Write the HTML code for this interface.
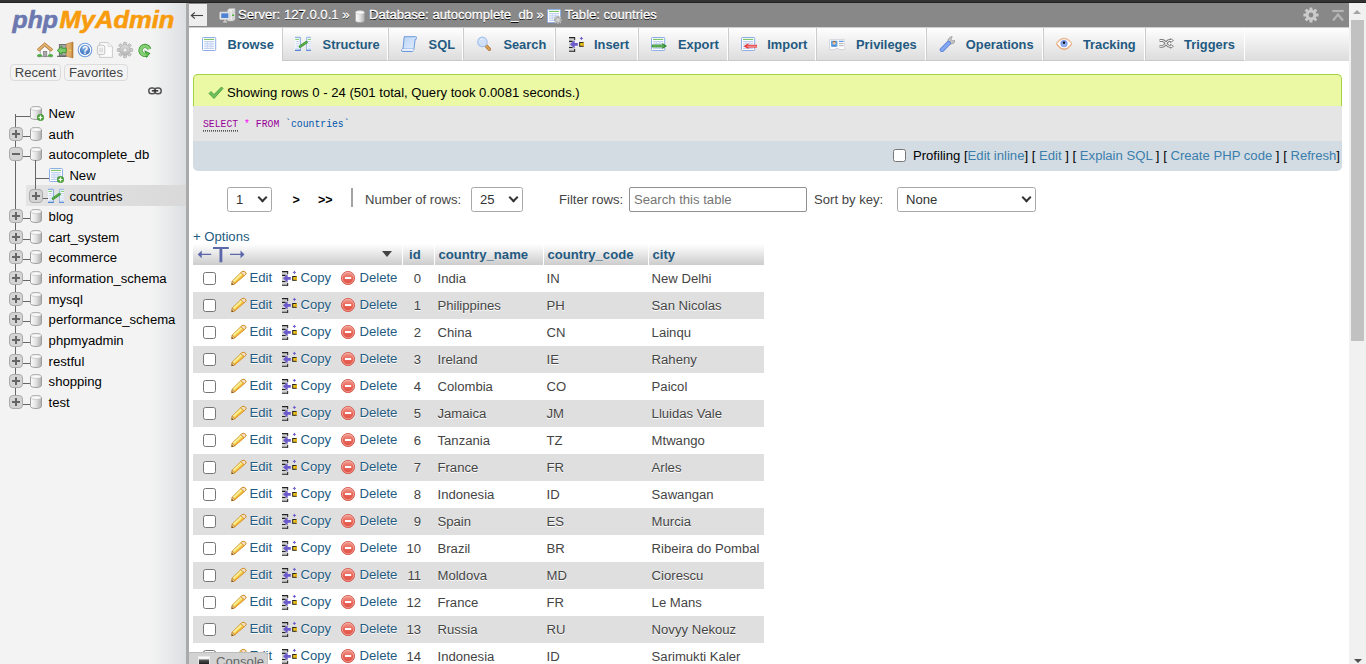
<!DOCTYPE html>
<html><head><meta charset="utf-8"><title>phpMyAdmin</title>
<style>
*{box-sizing:border-box}
html,body{margin:0;padding:0}
body{width:1366px;height:664px;overflow:hidden;background:#fff;position:relative;font-family:"Liberation Sans",sans-serif;font-size:13.12px;color:#444}
#strip{position:absolute;left:0;top:0;width:1366px;height:3px;background:linear-gradient(#333 0,#333 2px,#222 2px);z-index:50}
svg.i16{width:16px;height:16px;vertical-align:-3px;overflow:visible}
/* sidebar */
#nav{position:absolute;left:0;top:3px;width:186px;height:661px;background:linear-gradient(to right,#f3f3f3 0,#f3f3f3 151px,#e9ebec 166px,#dcdfe1 186px);color:#000}
#resz{position:absolute;left:186px;top:3px;width:3px;height:661px;background:#aaa}
#logo{position:absolute;left:0;top:0}
#navic{position:absolute;left:0;top:39px;width:186px;height:18px}
#navic svg{position:absolute;top:0;width:16px;height:16px;overflow:visible}
.nbtn{position:absolute;top:61px;height:17px;border:1px solid #dcdcdc;border-radius:4px;background:#f3f3f3;font-size:13.12px;line-height:15px;color:#444;text-align:center}
#tree{position:absolute;left:0;top:100px;width:186px}
.tl{position:absolute;background:#666}
.ti{position:absolute;height:20px;font-size:13.12px;line-height:20px;color:#000;white-space:nowrap}
.pm{position:absolute;width:14px;height:14px;border:1px solid #aaa;border-radius:4px;background:#d4d4d4}
.pm:before{content:"";position:absolute;left:2px;top:5px;width:8px;height:2px;background:#666}
.pm.p:after{content:"";position:absolute;left:5px;top:2px;width:2px;height:8px;background:#666}
/* top */
#hdr{position:absolute;left:189px;top:3px;width:1160px;height:24px;background:#888;color:#fff;-webkit-text-stroke:.3px #fff;font-size:13.12px;line-height:24px;white-space:nowrap;text-shadow:0 1px 0 #000}
#coll{position:absolute;left:0;top:1px;width:18px;height:22px;background:#eee;color:#555;text-shadow:none}
#tabs{position:absolute;left:189px;top:27px;width:1160px;height:34px;background:linear-gradient(#fff,#dcdcdc)}
.tab{position:absolute;top:0;height:34px;border-left:1px solid #ccc;border-right:1px solid #fff;border-bottom:1px solid #c8c8c8;font-weight:bold;color:#235a81;font-size:12.85px;line-height:36px;white-space:nowrap}
.tab.act{background:#fff;height:34px;border-left:0;border-bottom:0}
.tab svg,.tab span{margin-left:-1px}
.tab.act svg,.tab.act span{margin-left:0}
#hline{position:absolute;left:189px;top:27px;width:1160px;height:1px;background:#cfcfcf}
.tab svg{position:absolute;top:9px;width:16px;height:16px;overflow:visible}
.tab span{position:absolute;top:0}
#ok{position:absolute;left:193px;top:74px;width:1149px;height:32px;background:#ebf8a4;border:1px solid #a2d246;border-bottom:0;border-radius:5px 5px 0 0;color:#000;font-size:13.12px;line-height:35px}
#sql{position:absolute;left:193px;top:106px;width:1149px;height:35px;background:#e5e5e5;font-family:"Liberation Mono",monospace;font-size:9.77px;line-height:34px;white-space:pre}
#sql>span{transform:scaleY(1.18);transform-origin:0 60%;top:2px}
#tools{position:absolute;left:193px;top:141px;width:1149px;height:30px;background:#d3dce3;border-radius:0 0 5px 5px;color:#000;font-size:13.12px;line-height:29px;text-align:right;white-space:nowrap}
#tools a{color:#3a7ead}
.cb{display:inline-block;width:13px;height:13px;border:1px solid #767676;border-radius:2.5px;background:#fff;vertical-align:middle}
#res td.ck .cb{position:relative;top:-1px}
#navbar{position:absolute;left:189px;top:180px;width:1160px;height:40px;font-size:13.12px;color:#444}
#navbar>*{position:absolute}
.sel{border:1px solid #a8a8a8;border-radius:2.500px;background:#fff;height:25px;line-height:24px;color:#333;font-size:13.12px;padding-left:8px}
.sel:after{content:"";position:absolute;box-sizing:border-box;right:4.900px;top:5.900px;width:7px;height:7px;border-right:2.300px solid #333;border-bottom:2.300px solid #333;transform:rotate(45deg)}
.inp{border:1px solid #8f8f8f;border-radius:2px;background:#fff;height:25px;line-height:24px;color:#757575;font-size:13.12px;padding-left:4px}
.gt{font-weight:bold;color:#000;font-size:12.500px;line-height:15px}
.lb{line-height:15px}
#opts{position:absolute;left:193px;top:229px;font-size:13.12px;line-height:16px;color:#235a81}
/* table */
#res{position:absolute;left:193px;top:244px;width:571px;table-layout:fixed;border-collapse:collapse;font-size:13.12px;color:#444}
#res th{height:21px;padding:0;background:linear-gradient(#fff,#ccc);color:#235a81;font-weight:bold;text-align:left;font-size:13.12px;white-space:nowrap;position:relative;padding-left:4px}
#res th+th{border-left:1px solid #fff}
#res th.hid{padding-left:6.500px}
#res td.ck{padding-left:10px}
#res td.id{text-align:right;padding-right:13px}
#res td.cn,#res td.cc{padding-left:3.500px}
#res td.ci{padding-left:3.600px}
#res td{height:27px;padding:0;white-space:nowrap;text-shadow:0 1px 0 #fff}
#res tr.even td{background:#dfdfdf}
#res tr.odd td{background:#fff}
#res td.ac{color:#235a81;position:relative;padding-left:22.500px}
#res td.ac svg.ic{position:absolute;top:5px;width:16px;height:16px;overflow:visible}
#res td.ac span{position:relative;top:-1px}
#console{position:absolute;left:189px;top:652px;width:79px;height:20px;background:#d2d2d2;border-top:1px solid #bcbcbc;border-right:1px solid #c4c4c4;border-radius:0 4px 0 0;font-size:13.12px;color:#666;line-height:17px;padding-left:27px;text-shadow:none}
#console .cbx{position:absolute;left:9px;top:3px;width:12px;height:12px;background:linear-gradient(#fff 0,#eee 2px,#555 3px,#111 8px);border:1px solid #e8e8e8;border-bottom:0}
#sbar{position:absolute;left:1349px;top:3px;width:17px;height:661px;background:#f1f1f1}
#sbar .thumb{position:absolute;left:2px;top:17px;width:13px;height:321px;background:#c1c1c1}
#sbar .up{position:absolute;left:4px;top:7px;width:0;height:0;border:4px solid transparent;border-top:0;border-bottom:4px solid #a3a3a3}
#sbar .down{position:absolute;left:4.500px;bottom:1px;width:0;height:0;border:4px solid transparent;border-bottom:0;border-top:4px solid #505050}

.tri{position:absolute;left:189px;top:7px;width:0;height:0;border-left:5.500px solid transparent;border-right:5.500px solid transparent;border-top:6px solid #444}

</style></head><body>
<svg width="0" height="0" style="position:absolute">
<defs>
<linearGradient id="gdb" x1="0" x2="1" y1="0" y2="0"><stop offset="0" stop-color="#fdfdfd"/><stop offset=".5" stop-color="#e2e2e2"/><stop offset="1" stop-color="#adadad"/></linearGradient>
<linearGradient id="gpen" x1="0" x2="1" y1="0" y2="1"><stop offset="0" stop-color="#fbe58a"/><stop offset="1" stop-color="#e9b21f"/></linearGradient>
<radialGradient id="gdel" cx=".4" cy=".3" r=".8"><stop offset="0" stop-color="#f7a08f"/><stop offset="1" stop-color="#d8372a"/></radialGradient>
<radialGradient id="ghelp" cx=".5" cy=".3" r=".8"><stop offset="0" stop-color="#8db4e6"/><stop offset="1" stop-color="#2f66b5"/></radialGradient>
<symbol id="i-db" viewBox="0 0 12 14"><path d="M.5 2.5C.5 1.4 3 .5 6 .5s5.500.9 5.500 2v9c0 1.100-2.500 2-5.500 2S.5 12.600.5 11.500z" fill="url(#gdb)" stroke="#a0a0a0"/><ellipse cx="6" cy="2.600" rx="5.200" ry="1.900" fill="#f8f8f8" stroke="#bcbcbc" stroke-width=".6"/></symbol>
<symbol id="i-plus" viewBox="0 0 8 8"><circle cx="4" cy="4" r="3.800" fill="#4fa83a" stroke="#2e7d22" stroke-width=".5"/><path d="M4 1.800v4.400M1.800 4h4.400" stroke="#fff" stroke-width="1.400"/></symbol>
<symbol id="i-edit" viewBox="0 0 16 16"><path d="M.8 14.700L1.300 11 11 1.600Q13.300.7 14.500 2.300 15.300 3.500 14.600 4.500L4 13.700z" fill="#f6e25e" stroke="#c98a1f" stroke-width=".9" stroke-linejoin="round"/><path d="M4 12.900L13.900 4.300" stroke="#eda73a" stroke-width="1.300"/><path d="M2.300 11.400L11.800 2.400" stroke="#fbf3b0" stroke-width="1.200"/><path d="M11 1.600Q13.300.7 14.500 2.300 15.300 3.500 14.600 4.500L13.300 5.700 9.800 2.800z" fill="#f8dfcb" stroke="#c98a1f" stroke-width=".8"/><path d="M.8 14.700L1.300 11 4 13.700z" fill="#f5d6b0" stroke="#b97a22" stroke-width=".7" stroke-linejoin="round"/><path d="M.6 14.900l.3-1.900 1.500 1.400z" fill="#6a4208"/></symbol>
<symbol id="i-copy" viewBox="0 0 16 16"><rect x="0" y="1.600" width="5.600" height="13.600" fill="#cfcfcf"/><path d="M0 1.600h6M0 15.300h6M0 5.400h3.600M0 11.500h3.600" stroke="#222" stroke-width="1.100"/><path d="M5.700 1.100v2.900M5.700 13v2.800" stroke="#222" stroke-width="1"/><path d="M1 8.300L5.600 4.200v2.800h3.200v2.700H5.600v2.900z" fill="#6a5acd"/><rect x="10.700" y="6.500" width="3.600" height="3.800" fill="#f8c81c" stroke="#222" stroke-width="1"/><path d="M14.300 6.500v3.800" stroke="#f8c81c" stroke-width="1.100"/><path d="M12.400.9v3M10.900 2.400h3" stroke="#6a5acd" stroke-width="1"/></symbol>
<symbol id="i-del" viewBox="0 0 16 16"><defs><linearGradient id="gdl" x1="0" x2="0" y1="0" y2="1"><stop offset="0" stop-color="#f3a196"/><stop offset=".5" stop-color="#e8665a"/><stop offset="1" stop-color="#e04f43"/></linearGradient></defs><circle cx="8" cy="8" r="6.600" fill="url(#gdl)" stroke="#d2594c" stroke-width=".9"/><circle cx="8" cy="8" r="5.700" fill="none" stroke="#f6b9b0" stroke-width=".6"/><rect x="5" y="7" width="6.200" height="2" fill="#fff"/></symbol>
<symbol id="i-browse" viewBox="0 0 16 16"><rect x=".5" y="1.500" width="13.200" height="13" rx=".8" fill="#fff" stroke="#8eaee8"/><path d="M2 3.400h10.200" stroke="#79c267" stroke-width="1.100"/><path d="M2 5.700h10.200M2 7.900h10.200M2 10.100h10.200M2 12.300h10.200" stroke="#a9c0ea" stroke-width=".9"/><path d="M5.400 5.200v7.600M8.900 5.200v7.600" stroke="#c3d4f3" stroke-width=".8"/></symbol>
<symbol id="i-struct" viewBox="0 0 16 16"><path d="M0 1.300h5.300v13H0" fill="#fff" stroke="#7aa0e2" stroke-width="1"/><path d="M0 14.300h5.800" stroke="#4f7fd0" stroke-width="1.200"/><path d="M16 1.300h-4.300v13H16" fill="#fff" stroke="#8fb0ea" stroke-width="1"/><path d="M11.200 14.300H16" stroke="#5f8ad6" stroke-width="1.200"/><path d="M.3 3.300h3.700M12.800 3.300H16" stroke="#6fc05e" stroke-width="1"/><path d="M.5 5.600h3.500M.5 7.800h3.500M.5 10h3.500M.5 12.200h3.500M13 5.600h3M13 7.800h3M13 10h3M13 12.200h3" stroke="#b5cbef" stroke-width=".9"/><path d="M5 10.600L11.600 6.200" stroke="#3f9a34" stroke-width="2.700" stroke-linecap="round"/><path d="M5 10.600L11.600 6.200" stroke="#8fd07f" stroke-width=".8" stroke-dasharray="1.200 1"/></symbol>
<symbol id="i-sql" viewBox="0 0 16 16"><defs><linearGradient id="gsq" x1="0" x2="1" y1="0" y2="1"><stop offset="0" stop-color="#b9d3f6"/><stop offset="1" stop-color="#e6f0fc"/></linearGradient></defs><path d="M3.200.700H14.600q1.700.3 1.300 1.800-.4 1-1.700.9L12.800 13.500q-.2 1.800-1.600 2H1.300q-1.200-.3-.8-1.500.4-1 1.500-.9z" fill="url(#gsq)" stroke="#5f8fd6" stroke-width=".9" stroke-linejoin="round"/><path d="M1.200 13.600h10q.9.200.6 1.200" fill="none" stroke="#fff" stroke-width="1.300"/><path d="M1.600 12.800h10.400" stroke="#7fa5e0" stroke-width=".6"/></symbol>
<symbol id="i-search" viewBox="0 0 16 16"><path d="M9 9.700L12.300 13.200" stroke="#a86a20" stroke-width="3.400" stroke-linecap="round"/><path d="M9 9.700L12.300 13.200" stroke="#dca260" stroke-width="1.900" stroke-linecap="round"/><circle cx="5.400" cy="5.900" r="4.700" fill="#cfe0f8" stroke="#a5c2ec" stroke-width="1.200"/><path d="M2.800 4.500a3 3 0 0 1 3-1.600" fill="none" stroke="#eef5fd" stroke-width="1"/></symbol>
<symbol id="i-export" viewBox="0 0 16 16"><rect x=".5" y="1.500" width="13.200" height="13" rx=".8" fill="#fff" stroke="#8eaee8"/><path d="M2 3.400h10.200" stroke="#79c267" stroke-width="1.100"/><path d="M2 5.700h10.200M2 7.900h10.200M2 10.100h10.200M2 12.300h10.200" stroke="#a9c0ea" stroke-width=".9"/><path d="M5.400 5.200v7.600M8.900 5.200v7.600" stroke="#c3d4f3" stroke-width=".8"/><path d="M.8 10h11" stroke="#2f8a2a" stroke-width="2.800"/><path d="M11.300 7.100L16.200 10l-4.900 2.900z" fill="#2f8a2a"/><path d="M1.500 10h11.500" stroke="#9ad88a" stroke-width=".8"/></symbol>
<symbol id="i-import" viewBox="0 0 16 16"><rect x=".5" y="1.500" width="13.200" height="13" rx=".8" fill="#fff" stroke="#8eaee8"/><path d="M2 3.400h10.200" stroke="#79c267" stroke-width="1.100"/><path d="M2 5.700h10.200M2 7.900h10.200M2 10.100h10.200M2 12.300h10.200" stroke="#a9c0ea" stroke-width=".9"/><path d="M5.400 5.200v7.600M8.900 5.200v7.600" stroke="#c3d4f3" stroke-width=".8"/><path d="M16.200 10.200H7" stroke="#e8383a" stroke-width="2.800"/><path d="M7.400 7.300L2.500 10.200l4.900 2.900z" fill="#e8383a"/><path d="M6 10.200h9.600" stroke="#fbc0c0" stroke-width=".8"/></symbol>
<symbol id="i-priv" viewBox="0 0 16 16"><path d="M1.200 3.700h13.800q.8 0 .8.800v8.300q0 .8-.8.800H10.400q-.3-1.300-2.300-1.300t-2.300 1.300H1.200q-.8 0-.8-.8V4.500q0-.8.800-.8z" fill="#fdfdfd" stroke="#c6cad2" stroke-width=".8"/><rect x="2" y="4.800" width="6.400" height="5.800" fill="#5ba3e8"/><circle cx="5.200" cy="7" r="1.700" fill="#f0c39a"/><path d="M3.400 6.700q.3-1.900 1.900-1.800 1.600 0 1.700 1.800-.9-.9-1.800-.8-1 0-1.800.8z" fill="#8a5a2a"/><path d="M2.600 10.600q2.600-3 5.200 0z" fill="#3f7fd0"/><path d="M10 5.400h4.600" stroke="#4f8fe0" stroke-width="1.100"/><path d="M10 7.600h4.600M10 9.700h4.600" stroke="#a9a9a9" stroke-width=".9"/></symbol>
<symbol id="i-oper" viewBox="0 0 16 16"><path d="M10.200 7.600L8.700 6Q8.400 2.400 11.700.9L13.200.6 12 3.300l1.300 1.600 2.900-.5Q15.800 7.800 12.200 8z" fill="#c6c6c6" stroke="#9a9a9a" stroke-width=".8" stroke-linejoin="round"/><path d="M3 13.800L9.600 7.200" stroke="#5a82d8" stroke-width="4.600" stroke-linecap="round"/><path d="M3 13.800L9.600 7.200" stroke="#86a8f0" stroke-width="3" stroke-linecap="round"/></symbol>
<symbol id="i-track" viewBox="0 0 16 16"><path d="M.4 7.700Q8-2.700 16 7.700 8 19.500.4 7.700z" fill="#fff" stroke="#ecbb96" stroke-width="1.300"/><path d="M1 8.400Q8 17.800 15.400 8.400" fill="none" stroke="#e3a67a" stroke-width="1"/><circle cx="8" cy="7.600" r="3.600" fill="#7a9bea"/><circle cx="8" cy="8.300" r="2.400" fill="#93b0f0"/><circle cx="8" cy="6.800" r="1.200" fill="#111"/></symbol>
<symbol id="i-trig" viewBox="0 0 16 16"><g fill="none" stroke="#7d7d7d" stroke-width="2.800"><path d="M.6 4.500H3.400C6.800 4.500 7.300 10.300 10.300 10.300H12"/><path d="M.6 10.300H3.400C6.800 10.300 7.300 4.500 10.300 4.500H12"/></g><path d="M11.500 2.500L14.500 4.500l-3 2zM11.500 8.300L14.500 10.300l-3 2z" fill="#fff" stroke="#7d7d7d" stroke-width=".9" stroke-linejoin="round"/><g fill="none" stroke="#fff" stroke-width="1"><path d="M1.100 4.500H3.400C6.800 4.500 7.300 10.300 10.300 10.300H12.500"/><path d="M1.100 10.300H3.400C6.800 10.300 7.300 4.500 10.300 4.500H12.500"/></g></symbol>
<symbol id="i-tbl" viewBox="0 0 14 14"><rect x=".5" y=".5" width="13" height="13" rx=".8" fill="#fff" stroke="#8eaee8"/><path d="M2 2.400h10" stroke="#79c267" stroke-width="1.100"/><path d="M2 4.700h10M2 6.900h10M2 9.100h10M2 11.300h10" stroke="#a9c0ea" stroke-width=".9"/><path d="M5.300 4.200v7.600M8.700 4.200v7.600" stroke="#c3d4f3" stroke-width=".8"/></symbol>
</defs></svg>

<div id="strip"></div>
<div id="nav">
<svg id="logo" width="186" height="36" viewBox="0 0 186 36"><g font-family="Liberation Sans, sans-serif" font-style="italic" font-weight="bold" font-size="23.300" stroke-width=".6" stroke-linejoin="round">
<text x="12.500" y="24.600" fill="#6c78af" stroke="#6c78af" textLength="45.500" lengthAdjust="spacingAndGlyphs">php</text>
<text x="59.400" y="24.600" fill="#f89c0e" stroke="#f89c0e" textLength="115.100" lengthAdjust="spacingAndGlyphs">MyAdmin</text></g></svg>
<div id="navic">
<svg style="left:37px" viewBox="0 0 16 16"><path d="M3.400 8.200L7.700 4.300l5.100 3.900V14.300H3.400z" fill="#fbfbfb" stroke="#9a9a9a" stroke-width=".7"/><rect x="6.300" y="9.500" width="3.500" height="5" fill="#a9a9a9" stroke="#7d7d7d" stroke-width=".7"/><path d="M.3 7.300L7.700.8l8 6.500-1.700 2L7.700 4 2 9.300z" fill="#e2b271" stroke="#b0722a" stroke-width=".8" stroke-linejoin="round"/><ellipse cx="2.600" cy="13.600" rx="2.600" ry="1.600" fill="#4db044"/><ellipse cx="13.500" cy="13.600" rx="2.600" ry="1.600" fill="#4db044"/><path d="M.2 14.600h15.800" stroke="#8a8a8a" stroke-width=".5"/></svg>
<svg style="left:57px" viewBox="0 0 16 16"><defs><linearGradient id="gdoor" x1="0" x2="1"><stop offset="0" stop-color="#e6bb7e"/><stop offset=".7" stop-color="#d9a45c"/><stop offset="1" stop-color="#b5762a"/></linearGradient></defs><rect x="2.400" y="2.600" width="7" height="11.400" fill="#a9a9a9" stroke="#6a6a6a" stroke-width="1"/><path d="M0 14.300h9.500" stroke="#555" stroke-width="1"/><path d="M9.200 2L16 0v16L9.200 14z" fill="url(#gdoor)" stroke="#b07a30" stroke-width=".6"/><circle cx="13.300" cy="8.400" r=".9" fill="#f7dc3c"/><path d="M.2 8.400L4.800 4v2.200h4.400v4.400H4.800v2.200z" fill="#79c968" stroke="#2f8a2a" stroke-width=".8" stroke-linejoin="round"/></svg>
<svg style="left:77px" viewBox="0 0 16 16"><circle cx="8" cy="8" r="6.800" fill="#fff" stroke="#6e9be0" stroke-width="1.100"/><circle cx="8" cy="8" r="5.100" fill="url(#ghelp)"/><text x="8" y="11.600" text-anchor="middle" font-family="Liberation Sans, sans-serif" font-weight="bold" font-size="10" fill="#fff">?</text></svg>
<svg style="left:97px" viewBox="0 0 16 16"><path d="M2.600.6H11l4.400 4V15.400H2.600z" fill="#fcfcfc" stroke="#c4c4c4" stroke-width=".9"/><path d="M11 .6v4h4.400" fill="#f1f1f1" stroke="#d6d6d6" stroke-width=".7"/><rect x=".4" y="3.200" width="7.400" height="9.400" rx="2" fill="#f6f6f6" stroke="#bdbdbd" stroke-width=".9"/><path d="M3 5.800v4.400M5.100 5.800v4.400" stroke="#cfcfcf" stroke-width="1.100"/></svg>
<svg style="left:117px" viewBox="0 0 16 16"><defs><linearGradient id="ggear" x1="0" x2="0" y1="0" y2="1"><stop offset="0" stop-color="#dedede"/><stop offset="1" stop-color="#b4b4b4"/></linearGradient></defs><rect x="6.500" y=".3" width="3" height="4" rx=".7" transform="rotate(0 8 8)" fill="#cfcfcf" stroke="#a3a3a3" stroke-width=".6"/><rect x="6.500" y=".3" width="3" height="4" rx=".7" transform="rotate(45 8 8)" fill="#cfcfcf" stroke="#a3a3a3" stroke-width=".6"/><rect x="6.500" y=".3" width="3" height="4" rx=".7" transform="rotate(90 8 8)" fill="#cfcfcf" stroke="#a3a3a3" stroke-width=".6"/><rect x="6.500" y=".3" width="3" height="4" rx=".7" transform="rotate(135 8 8)" fill="#cfcfcf" stroke="#a3a3a3" stroke-width=".6"/><rect x="6.500" y=".3" width="3" height="4" rx=".7" transform="rotate(180 8 8)" fill="#cfcfcf" stroke="#a3a3a3" stroke-width=".6"/><rect x="6.500" y=".3" width="3" height="4" rx=".7" transform="rotate(225 8 8)" fill="#cfcfcf" stroke="#a3a3a3" stroke-width=".6"/><rect x="6.500" y=".3" width="3" height="4" rx=".7" transform="rotate(270 8 8)" fill="#cfcfcf" stroke="#a3a3a3" stroke-width=".6"/><rect x="6.500" y=".3" width="3" height="4" rx=".7" transform="rotate(315 8 8)" fill="#cfcfcf" stroke="#a3a3a3" stroke-width=".6"/><circle cx="8" cy="8" r="5.300" fill="url(#ggear)" stroke="#a8a8a8" stroke-width=".5"/><circle cx="8" cy="8" r="2" fill="#f0f0f0" stroke="#b0b0b0" stroke-width=".6"/></svg>
<svg style="left:137px" viewBox="0 0 16 16"><path d="M12.300 7.100A4.500 4.500 0 1 0 10.200 12.400" fill="none" stroke="#3f9a34" stroke-width="4.200"/><path d="M7.400 8.300l6 3-4.100 4.700z" fill="#2f8a2a"/><path d="M12.200 7.100A4.400 4.400 0 1 0 10.200 12.300" fill="none" stroke="#86cf77" stroke-width="2.800"/><path d="M8.300 9.400l4 2-2.700 3.100z" fill="#5fb84f"/></svg>
</div>
<div class="nbtn" style="left:10px;width:51px">Recent</div>
<div class="nbtn" style="left:64px;width:64px">Favorites</div>
<svg style="position:absolute;left:148px;top:84px" width="14" height="8" viewBox="0 0 14 8"><rect x=".8" y=".9" width="6.600" height="5.800" rx="2.800" fill="none" stroke="#555" stroke-width="1.500"/><rect x="6.600" y=".9" width="6.600" height="5.800" rx="2.800" fill="none" stroke="#555" stroke-width="1.500"/><path d="M3.800 3.800h6.400" stroke="#333" stroke-width="1.500"/></svg>
<div id="tree" style="top:0">
<div class="tl" style="left:15px;top:111.0px;width:1px;height:290.0px"></div>
<div style="position:absolute;left:26px;top:182px;width:160px;height:21px;background:linear-gradient(to right,#e4e4e4,#d9d9d9)"></div>
<div class="tl" style="left:15px;top:113.0px;width:15px;height:1px"></div>
<svg style="position:absolute;left:30px;top:103.0px;overflow:visible" width="12" height="14"><use href="#i-db"/></svg><svg style="position:absolute;left:37px;top:111.2px" width="7" height="7"><use href="#i-plus"/></svg>
<div class="ti" style="left:48.600px;top:101.0px">New</div>
<div class="tl" style="left:15px;top:133.0px;width:15px;height:1px"></div>
<div class="pm p" style="left:9px;top:124.0px"></div>
<svg style="position:absolute;left:30px;top:124.0px;overflow:visible" width="12" height="14"><use href="#i-db"/></svg>
<div class="ti" style="left:48.600px;top:122.0px">auth</div>
<div class="tl" style="left:15px;top:153.0px;width:15px;height:1px"></div>
<div class="pm " style="left:9px;top:144.0px"></div>
<svg style="position:absolute;left:30px;top:144.0px;overflow:visible" width="12" height="14"><use href="#i-db"/></svg>
<div class="ti" style="left:48.600px;top:142.0px">autocomplete_db</div>
<div class="tl" style="left:15px;top:215.0px;width:15px;height:1px"></div>
<div class="pm p" style="left:9px;top:206.0px"></div>
<svg style="position:absolute;left:30px;top:206.0px;overflow:visible" width="12" height="14"><use href="#i-db"/></svg>
<div class="ti" style="left:48.600px;top:204.0px">blog</div>
<div class="tl" style="left:15px;top:236.0px;width:15px;height:1px"></div>
<div class="pm p" style="left:9px;top:227.0px"></div>
<svg style="position:absolute;left:30px;top:227.0px;overflow:visible" width="12" height="14"><use href="#i-db"/></svg>
<div class="ti" style="left:48.600px;top:225.0px">cart_system</div>
<div class="tl" style="left:15px;top:256.0px;width:15px;height:1px"></div>
<div class="pm p" style="left:9px;top:247.0px"></div>
<svg style="position:absolute;left:30px;top:247.0px;overflow:visible" width="12" height="14"><use href="#i-db"/></svg>
<div class="ti" style="left:48.600px;top:245.0px">ecommerce</div>
<div class="tl" style="left:15px;top:277.0px;width:15px;height:1px"></div>
<div class="pm p" style="left:9px;top:268.0px"></div>
<svg style="position:absolute;left:30px;top:268.0px;overflow:visible" width="12" height="14"><use href="#i-db"/></svg>
<div class="ti" style="left:48.600px;top:266.0px">information_schema</div>
<div class="tl" style="left:15px;top:298.0px;width:15px;height:1px"></div>
<div class="pm p" style="left:9px;top:289.0px"></div>
<svg style="position:absolute;left:30px;top:289.0px;overflow:visible" width="12" height="14"><use href="#i-db"/></svg>
<div class="ti" style="left:48.600px;top:287.0px">mysql</div>
<div class="tl" style="left:15px;top:318.0px;width:15px;height:1px"></div>
<div class="pm p" style="left:9px;top:309.0px"></div>
<svg style="position:absolute;left:30px;top:309.0px;overflow:visible" width="12" height="14"><use href="#i-db"/></svg>
<div class="ti" style="left:48.600px;top:307.0px">performance_schema</div>
<div class="tl" style="left:15px;top:339.0px;width:15px;height:1px"></div>
<div class="pm p" style="left:9px;top:330.0px"></div>
<svg style="position:absolute;left:30px;top:330.0px;overflow:visible" width="12" height="14"><use href="#i-db"/></svg>
<div class="ti" style="left:48.600px;top:328.0px">phpmyadmin</div>
<div class="tl" style="left:15px;top:360.0px;width:15px;height:1px"></div>
<div class="pm p" style="left:9px;top:351.0px"></div>
<svg style="position:absolute;left:30px;top:351.0px;overflow:visible" width="12" height="14"><use href="#i-db"/></svg>
<div class="ti" style="left:48.600px;top:349.0px">restful</div>
<div class="tl" style="left:15px;top:380.0px;width:15px;height:1px"></div>
<div class="pm p" style="left:9px;top:371.0px"></div>
<svg style="position:absolute;left:30px;top:371.0px;overflow:visible" width="12" height="14"><use href="#i-db"/></svg>
<div class="ti" style="left:48.600px;top:369.0px">shopping</div>
<div class="tl" style="left:15px;top:401.0px;width:15px;height:1px"></div>
<div class="pm p" style="left:9px;top:392.0px"></div>
<svg style="position:absolute;left:30px;top:392.0px;overflow:visible" width="12" height="14"><use href="#i-db"/></svg>
<div class="ti" style="left:48.600px;top:390.0px">test</div>
<div class="tl" style="left:35px;top:157.0px;width:1px;height:39.0px"></div>
<div class="tl" style="left:35px;top:175.0px;width:14px;height:1px"></div>
<svg style="position:absolute;left:49px;top:165.0px;overflow:visible" width="14" height="14" viewBox="0 0 14 14"><use href="#i-tbl" width="14" height="14"/></svg><svg style="position:absolute;left:57px;top:172.5px" width="7" height="7"><use href="#i-plus"/></svg>
<div class="ti" style="left:69.400px;top:163.0px">New</div>
<div class="tl" style="left:35px;top:195.0px;width:14px;height:1px"></div>
<div class="pm p" style="left:29px;top:186.0px"></div>
<svg style="position:absolute;left:48px;top:185.0px;overflow:visible" width="16" height="16" viewBox="0 0 16 16"><use href="#i-struct" width="16" height="16"/></svg>
<div class="ti" style="left:69.400px;top:184.0px">countries</div>
</div>
</div><div id="resz"></div>
<div id="hdr"><div id="coll"><svg style="position:absolute;left:0;top:0" width="18" height="22" viewBox="0 0 18 22"><path d="M2.500 11.500h11.500" stroke="#444" stroke-width="1.100"/><path d="M5.800 8.500L2.300 11.500l3.500 3" fill="none" stroke="#444" stroke-width="1.100"/></svg></div>
<svg style="position:absolute;left:30px;top:4.200px;overflow:visible" width="17" height="17" viewBox="0 0 17 16"><path d="M8.500 2.500l2-1.500h5.500v11l-2 1.500h-5.500z" fill="#e9e9e9" stroke="#b5b5b5" stroke-width=".7"/><path d="M14 2.500v11" stroke="#c5c5c5"/><rect x="13" y="7" width="2" height="1.500" fill="#4fb83a"/><rect x=".8" y="4.500" width="10" height="7.500" rx=".8" fill="#f1f1f1" stroke="#c8c8c8" stroke-width=".8"/><rect x="2.200" y="5.800" width="7.200" height="4.800" fill="#4f82d0"/><path d="M4 14.500h4M6 12v2.500" stroke="#ddd" stroke-width="1.200"/></svg>
<span style="position:absolute;left:49px">Server: 127.0.0.1 »</span>
<svg style="position:absolute;left:166px;top:7px;overflow:visible" width="10" height="13" viewBox="0 0 12 14" preserveAspectRatio="none"><use href="#i-db"/></svg>
<span style="position:absolute;left:180px">Database: autocomplete_db »</span>
<svg style="position:absolute;left:358px;top:6px;overflow:visible" width="14" height="14" viewBox="0 0 14 14"><use href="#i-tbl" width="14" height="14"/></svg><svg style="position:absolute;left:364.500px;top:12.500px" width="8" height="8" viewBox="0 0 8 8"><rect x="3.100" y="0" width="1.800" height="2.400" transform="rotate(0 4 4)" fill="#d0d0d0" stroke="#7a7a7a" stroke-width=".35"/><rect x="3.100" y="0" width="1.800" height="2.400" transform="rotate(45 4 4)" fill="#d0d0d0" stroke="#7a7a7a" stroke-width=".35"/><rect x="3.100" y="0" width="1.800" height="2.400" transform="rotate(90 4 4)" fill="#d0d0d0" stroke="#7a7a7a" stroke-width=".35"/><rect x="3.100" y="0" width="1.800" height="2.400" transform="rotate(135 4 4)" fill="#d0d0d0" stroke="#7a7a7a" stroke-width=".35"/><rect x="3.100" y="0" width="1.800" height="2.400" transform="rotate(180 4 4)" fill="#d0d0d0" stroke="#7a7a7a" stroke-width=".35"/><rect x="3.100" y="0" width="1.800" height="2.400" transform="rotate(225 4 4)" fill="#d0d0d0" stroke="#7a7a7a" stroke-width=".35"/><rect x="3.100" y="0" width="1.800" height="2.400" transform="rotate(270 4 4)" fill="#d0d0d0" stroke="#7a7a7a" stroke-width=".35"/><rect x="3.100" y="0" width="1.800" height="2.400" transform="rotate(315 4 4)" fill="#d0d0d0" stroke="#7a7a7a" stroke-width=".35"/><circle cx="4" cy="4" r="2.300" fill="#d6d6d6" stroke="#8a8a8a" stroke-width=".4"/><circle cx="4" cy="4" r=".9" fill="#f4f4f4" stroke="#8a8a8a" stroke-width=".3"/></svg>
<span style="position:absolute;left:376px">Table: countries</span>
<svg style="position:absolute;left:1113.500px;top:4px;text-shadow:none" width="16" height="16" viewBox="0 0 16 16"><rect x="6.500" y=".4" width="3" height="4.500" rx=".6" transform="rotate(0 8 8)" fill="#cbcbcb"/><rect x="6.500" y=".4" width="3" height="4.500" rx=".6" transform="rotate(45 8 8)" fill="#cbcbcb"/><rect x="6.500" y=".4" width="3" height="4.500" rx=".6" transform="rotate(90 8 8)" fill="#cbcbcb"/><rect x="6.500" y=".4" width="3" height="4.500" rx=".6" transform="rotate(135 8 8)" fill="#cbcbcb"/><rect x="6.500" y=".4" width="3" height="4.500" rx=".6" transform="rotate(180 8 8)" fill="#cbcbcb"/><rect x="6.500" y=".4" width="3" height="4.500" rx=".6" transform="rotate(225 8 8)" fill="#cbcbcb"/><rect x="6.500" y=".4" width="3" height="4.500" rx=".6" transform="rotate(270 8 8)" fill="#cbcbcb"/><rect x="6.500" y=".4" width="3" height="4.500" rx=".6" transform="rotate(315 8 8)" fill="#cbcbcb"/><circle cx="8" cy="8" r="3.900" fill="none" stroke="#cbcbcb" stroke-width="3"/></svg>
<svg style="position:absolute;left:1142.500px;top:6px" width="13" height="13" viewBox="0 0 13 13"><path d="M.3 2h11.400" stroke="#b4b4b4" stroke-width="2.200"/><path d="M1 11.500l5-6 5 6" fill="none" stroke="#b4b4b4" stroke-width="2.300"/></svg>
</div>
<div id="tabs">
<div class="tab act" style="left:0px;width:93px"><svg style="left:13.0px"><use href="#i-browse"/></svg><span style="left:38.5px">Browse</span></div>
<div class="tab" style="left:93px;width:106px"><svg style="left:13.0px"><use href="#i-struct"/></svg><span style="left:40.6px">Structure</span></div>
<div class="tab" style="left:199px;width:75px"><svg style="left:13.0px"><use href="#i-sql"/></svg><span style="left:40.6px">SQL</span></div>
<div class="tab" style="left:274px;width:92px"><svg style="left:14.0px"><use href="#i-search"/></svg><span style="left:40.4px">Search</span></div>
<div class="tab" style="left:366px;width:83px"><svg style="left:14.0px"><use href="#i-copy"/></svg><span style="left:39.0px">Insert</span></div>
<div class="tab" style="left:449px;width:90px"><svg style="left:13.0px"><use href="#i-export"/></svg><span style="left:40.0px">Export</span></div>
<div class="tab" style="left:539px;width:88px"><svg style="left:13.0px"><use href="#i-import"/></svg><span style="left:39.3px">Import</span></div>
<div class="tab" style="left:627px;width:110px"><svg style="left:13.0px"><use href="#i-priv"/></svg><span style="left:40.0px">Privileges</span></div>
<div class="tab" style="left:737px;width:117px"><svg style="left:12.5px"><use href="#i-oper"/></svg><span style="left:39.8px">Operations</span></div>
<div class="tab" style="left:854px;width:102px"><svg style="left:13.0px"><use href="#i-track"/></svg><span style="left:39.9px">Tracking</span></div>
<div class="tab" style="left:956px;width:100px"><svg style="left:13.5px"><use href="#i-trig"/></svg><span style="left:39.1px">Triggers</span></div>
</div><div id="hline"></div>
<div id="ok"><svg style="position:absolute;left:14px;top:11px" width="16" height="14" viewBox="0 0 16 14"><path d="M1 7.500l2-2 3 3L13.500 1l1.500 1.500L6 12.500z" fill="#6fbf5e" stroke="#3f9a34" stroke-width=".8"/></svg><span style="position:absolute;left:33px">Showing rows 0 - 24 (501 total, Query took 0.0081 seconds.)</span></div>
<div id="sql"><span style="position:absolute;left:10px"><span style="color:#909;border-bottom:1px dotted #222;padding-bottom:0">SELECT</span> <span style="color:#f0f">*</span> <span style="color:#909">FROM</span> <span style="color:#05a">`countries`</span></span></div>
<div id="tools"><span style="position:absolute;right:2px"><span class="cb" style="margin-right:7px;position:relative;top:-1px"></span>Profiling [<a>Edit inline</a>] [ <a>Edit</a> ] [ <a>Explain SQL</a> ] [ <a>Create PHP code</a> ] [ <a>Refresh</a>]</span></div>
<div id="navbar">
<div class="sel" style="left:38px;top:7px;width:45px">1</div>
<div class="gt" style="left:103.500px;top:13px">&gt;</div>
<div class="gt" style="left:129px;top:13px">&gt;&gt;</div>
<div style="left:162px;top:8px;width:2px;height:19px;background:#a4a4a4"></div>
<div class="lb" style="left:176px;top:12px">Number of rows:</div>
<div class="sel" style="left:282px;top:7px;width:52px">25</div>
<div class="lb" style="left:370px;top:12px">Filter rows:</div>
<div class="inp" style="left:440px;top:7px;width:178px">Search this table</div>
<div class="lb" style="left:625px;top:12px">Sort by key:</div>
<div class="sel" style="left:708px;top:7px;width:139px">None</div>
</div>
<div id="opts">+ Options</div>
<table id="res" cellspacing="0"><colgroup><col style="width:34px"><col style="width:51px"><col style="width:59px"><col style="width:65px"><col style="width:32px"><col style="width:109px"><col style="width:105px"><col style="width:116px"></colgroup>
<thead><tr><th class="h0" colspan="4"><svg style="position:absolute;left:4px;top:2px" width="48" height="18" viewBox="0 0 48 18"><g fill="#5b67a8"><path d="M.7 8.400L4.700 4.600v3.100h9.500v1.400H4.700v3.100z"/><path d="M16 .9h15.800v2.200h-6.500V16.200h-2.800V3.100H16z"/><path d="M47.500 8.400L43.500 4.600v3.100H33v1.400h10.500v3.100z"/></g></svg><span class="tri"></span></th><th class="hid">id</th><th class="hcn">country_name</th><th class="hcc">country_code</th><th class="hci">city</th></tr></thead>
<tbody>
<tr class="odd"><td class="ck"><span class="cb"></span></td><td class="ac"><svg class="ic" style="left:3.500px"><use href="#i-edit"/></svg><span>Edit</span></td><td class="ac"><svg class="ic" style="left:4px"><use href="#i-copy"/></svg><span>Copy</span></td><td class="ac"><svg class="ic" style="left:3px"><use href="#i-del"/></svg><span>Delete</span></td><td class="id">0</td><td class="cn">India</td><td class="cc">IN</td><td class="ci">New Delhi</td></tr>
<tr class="even"><td class="ck"><span class="cb"></span></td><td class="ac"><svg class="ic" style="left:3.500px"><use href="#i-edit"/></svg><span>Edit</span></td><td class="ac"><svg class="ic" style="left:4px"><use href="#i-copy"/></svg><span>Copy</span></td><td class="ac"><svg class="ic" style="left:3px"><use href="#i-del"/></svg><span>Delete</span></td><td class="id">1</td><td class="cn">Philippines</td><td class="cc">PH</td><td class="ci">San Nicolas</td></tr>
<tr class="odd"><td class="ck"><span class="cb"></span></td><td class="ac"><svg class="ic" style="left:3.500px"><use href="#i-edit"/></svg><span>Edit</span></td><td class="ac"><svg class="ic" style="left:4px"><use href="#i-copy"/></svg><span>Copy</span></td><td class="ac"><svg class="ic" style="left:3px"><use href="#i-del"/></svg><span>Delete</span></td><td class="id">2</td><td class="cn">China</td><td class="cc">CN</td><td class="ci">Lainqu</td></tr>
<tr class="even"><td class="ck"><span class="cb"></span></td><td class="ac"><svg class="ic" style="left:3.500px"><use href="#i-edit"/></svg><span>Edit</span></td><td class="ac"><svg class="ic" style="left:4px"><use href="#i-copy"/></svg><span>Copy</span></td><td class="ac"><svg class="ic" style="left:3px"><use href="#i-del"/></svg><span>Delete</span></td><td class="id">3</td><td class="cn">Ireland</td><td class="cc">IE</td><td class="ci">Raheny</td></tr>
<tr class="odd"><td class="ck"><span class="cb"></span></td><td class="ac"><svg class="ic" style="left:3.500px"><use href="#i-edit"/></svg><span>Edit</span></td><td class="ac"><svg class="ic" style="left:4px"><use href="#i-copy"/></svg><span>Copy</span></td><td class="ac"><svg class="ic" style="left:3px"><use href="#i-del"/></svg><span>Delete</span></td><td class="id">4</td><td class="cn">Colombia</td><td class="cc">CO</td><td class="ci">Paicol</td></tr>
<tr class="even"><td class="ck"><span class="cb"></span></td><td class="ac"><svg class="ic" style="left:3.500px"><use href="#i-edit"/></svg><span>Edit</span></td><td class="ac"><svg class="ic" style="left:4px"><use href="#i-copy"/></svg><span>Copy</span></td><td class="ac"><svg class="ic" style="left:3px"><use href="#i-del"/></svg><span>Delete</span></td><td class="id">5</td><td class="cn">Jamaica</td><td class="cc">JM</td><td class="ci">Lluidas Vale</td></tr>
<tr class="odd"><td class="ck"><span class="cb"></span></td><td class="ac"><svg class="ic" style="left:3.500px"><use href="#i-edit"/></svg><span>Edit</span></td><td class="ac"><svg class="ic" style="left:4px"><use href="#i-copy"/></svg><span>Copy</span></td><td class="ac"><svg class="ic" style="left:3px"><use href="#i-del"/></svg><span>Delete</span></td><td class="id">6</td><td class="cn">Tanzania</td><td class="cc">TZ</td><td class="ci">Mtwango</td></tr>
<tr class="even"><td class="ck"><span class="cb"></span></td><td class="ac"><svg class="ic" style="left:3.500px"><use href="#i-edit"/></svg><span>Edit</span></td><td class="ac"><svg class="ic" style="left:4px"><use href="#i-copy"/></svg><span>Copy</span></td><td class="ac"><svg class="ic" style="left:3px"><use href="#i-del"/></svg><span>Delete</span></td><td class="id">7</td><td class="cn">France</td><td class="cc">FR</td><td class="ci">Arles</td></tr>
<tr class="odd"><td class="ck"><span class="cb"></span></td><td class="ac"><svg class="ic" style="left:3.500px"><use href="#i-edit"/></svg><span>Edit</span></td><td class="ac"><svg class="ic" style="left:4px"><use href="#i-copy"/></svg><span>Copy</span></td><td class="ac"><svg class="ic" style="left:3px"><use href="#i-del"/></svg><span>Delete</span></td><td class="id">8</td><td class="cn">Indonesia</td><td class="cc">ID</td><td class="ci">Sawangan</td></tr>
<tr class="even"><td class="ck"><span class="cb"></span></td><td class="ac"><svg class="ic" style="left:3.500px"><use href="#i-edit"/></svg><span>Edit</span></td><td class="ac"><svg class="ic" style="left:4px"><use href="#i-copy"/></svg><span>Copy</span></td><td class="ac"><svg class="ic" style="left:3px"><use href="#i-del"/></svg><span>Delete</span></td><td class="id">9</td><td class="cn">Spain</td><td class="cc">ES</td><td class="ci">Murcia</td></tr>
<tr class="odd"><td class="ck"><span class="cb"></span></td><td class="ac"><svg class="ic" style="left:3.500px"><use href="#i-edit"/></svg><span>Edit</span></td><td class="ac"><svg class="ic" style="left:4px"><use href="#i-copy"/></svg><span>Copy</span></td><td class="ac"><svg class="ic" style="left:3px"><use href="#i-del"/></svg><span>Delete</span></td><td class="id">10</td><td class="cn">Brazil</td><td class="cc">BR</td><td class="ci">Ribeira do Pombal</td></tr>
<tr class="even"><td class="ck"><span class="cb"></span></td><td class="ac"><svg class="ic" style="left:3.500px"><use href="#i-edit"/></svg><span>Edit</span></td><td class="ac"><svg class="ic" style="left:4px"><use href="#i-copy"/></svg><span>Copy</span></td><td class="ac"><svg class="ic" style="left:3px"><use href="#i-del"/></svg><span>Delete</span></td><td class="id">11</td><td class="cn">Moldova</td><td class="cc">MD</td><td class="ci">Ciorescu</td></tr>
<tr class="odd"><td class="ck"><span class="cb"></span></td><td class="ac"><svg class="ic" style="left:3.500px"><use href="#i-edit"/></svg><span>Edit</span></td><td class="ac"><svg class="ic" style="left:4px"><use href="#i-copy"/></svg><span>Copy</span></td><td class="ac"><svg class="ic" style="left:3px"><use href="#i-del"/></svg><span>Delete</span></td><td class="id">12</td><td class="cn">France</td><td class="cc">FR</td><td class="ci">Le Mans</td></tr>
<tr class="even"><td class="ck"><span class="cb"></span></td><td class="ac"><svg class="ic" style="left:3.500px"><use href="#i-edit"/></svg><span>Edit</span></td><td class="ac"><svg class="ic" style="left:4px"><use href="#i-copy"/></svg><span>Copy</span></td><td class="ac"><svg class="ic" style="left:3px"><use href="#i-del"/></svg><span>Delete</span></td><td class="id">13</td><td class="cn">Russia</td><td class="cc">RU</td><td class="ci">Novyy Nekouz</td></tr>
<tr class="odd"><td class="ck"><span class="cb"></span></td><td class="ac"><svg class="ic" style="left:3.500px"><use href="#i-edit"/></svg><span>Edit</span></td><td class="ac"><svg class="ic" style="left:4px"><use href="#i-copy"/></svg><span>Copy</span></td><td class="ac"><svg class="ic" style="left:3px"><use href="#i-del"/></svg><span>Delete</span></td><td class="id">14</td><td class="cn">Indonesia</td><td class="cc">ID</td><td class="ci">Sarimukti Kaler</td></tr>
</tbody></table>
<div id="console"><span class="cbx"></span>Console</div>
<div id="sbar"><div class="up"></div><div class="thumb"></div><div class="down"></div></div>
</body></html>
